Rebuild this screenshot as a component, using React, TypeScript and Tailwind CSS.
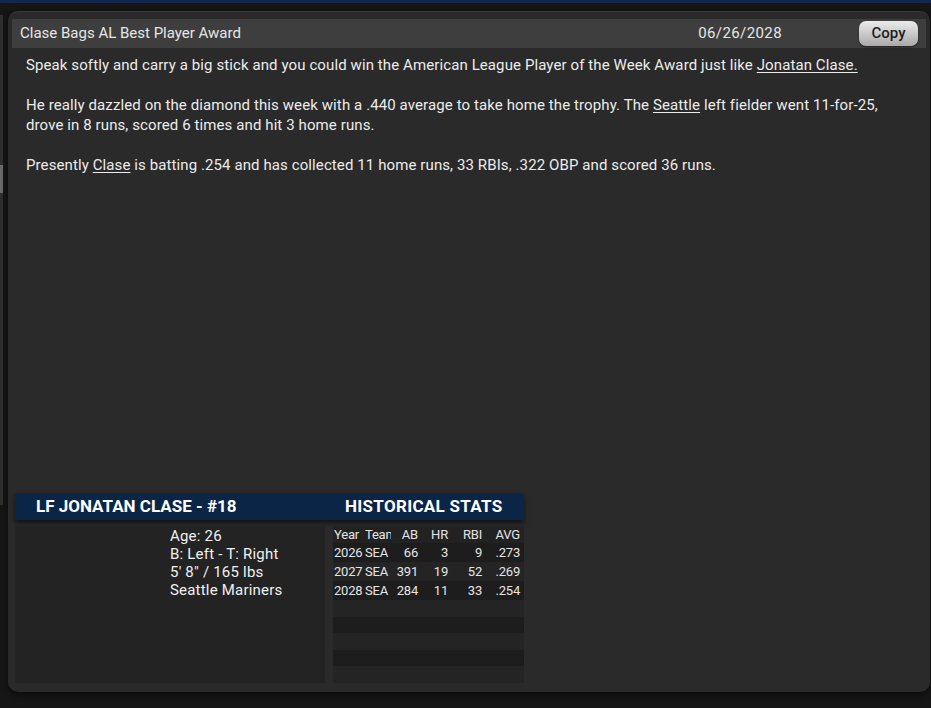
import React from "react";

const rows = [
  { y: "2026", t: "SEA", ab: "66", hr: "3", rbi: "9", avg: ".273" },
  { y: "2027", t: "SEA", ab: "391", hr: "19", rbi: "52", avg: ".269" },
  { y: "2028", t: "SEA", ab: "284", hr: "11", rbi: "33", avg: ".254" },
];

function Cells({ c }: { c: string[] }) {
  return (
    <>
      <div className="w-[32px] whitespace-nowrap pl-[1px]">{c[0]}</div>
      <div className="w-[26px] overflow-hidden whitespace-nowrap">{c[1]}</div>
      <div className="w-[28px] pr-[1px] text-right">{c[2]}</div>
      <div className="w-[30px] pr-[1px] text-right">{c[3]}</div>
      <div className="w-[34px] pr-[1px] text-right">{c[4]}</div>
      <div className="w-[38px] pr-[1px] text-right">{c[5]}</div>
    </>
  );
}

function Row({ r, i }: { r?: (typeof rows)[number]; i: number }) {
  const bg = i % 2 === 0 ? "bg-[#1d1d1e]" : "bg-[#242425]";
  return (
    <div className={`flex h-[19px] items-center text-[13px] tracking-[-0.2px] text-[#e4e4e4] ${bg}`}>
      <Cells c={r ? [r.y, r.t, r.ab, r.hr, r.rbi, r.avg] : ["", "", "", "", "", ""]} />
    </div>
  );
}

export default function App() {
  return (
    <div className="flex h-[708px] w-full flex-col overflow-hidden bg-[#161616] font-['Roboto',sans-serif]">
      <div className="h-[3px] bg-[#13284d]" />
      <div className="flex flex-1">
        <div className="mt-[12px] flex h-[490px] w-[3px] flex-col bg-[#2f2f2f]">
          <div className="mt-[150px] h-[28px] bg-[#6a6a6a]" />
        </div>
        <div className="ml-[5px] mt-[8px] flex h-[681px] w-[922px] flex-col rounded-[10px] border-t border-[#3a3a3a] bg-[#2a2a2a] px-[4px] pb-[9px] pt-[7px] shadow-[0_2px_6px_rgba(0,0,0,0.6)]">
          <div className="flex h-[29px] items-center bg-[#3e3e3e] pl-[8px] pr-[8px]">
            <div className="flex-1 text-[15px] text-[#e6e6e6]">Clase Bags AL Best Player Award</div>
            <div className="mr-[77px] text-[15px] tracking-[0.4px] text-[#e6e6e6]">06/26/2028</div>
            <button className="h-[25px] w-[59px] rounded-[7px] bg-gradient-to-b from-[#ececec] to-[#a9a9a9] text-[15px] font-medium text-[#1e1e1e] shadow-[0_1px_2px_rgba(0,0,0,0.5)]">
              Copy
            </button>
          </div>
          <div className="flex-1 pl-[14px] pr-[36px] pt-[7px] text-[15px] leading-[20px] tracking-[0.1px] text-[#ececec]">
            <p>
              Speak softly and carry a big stick and you could win the American League Player of the Week Award just like{" "}
              <span className="underline underline-offset-2">Jonatan Clase.</span>
            </p>
            <p className="mt-[20px]">
              He really dazzled on the diamond this week with a .440 average to take home the trophy. The{" "}
              <span className="underline underline-offset-2">Seattle</span> left fielder went 11-for-25, drove in 8 runs, scored 6 times and hit 3 home runs.
            </p>
            <p className="mt-[20px]">
              Presently <span className="underline underline-offset-2">Clase</span> is batting .254 and has collected 11 home runs, 33 RBIs, .322 OBP and scored 36 runs.
            </p>
          </div>
          <div className="ml-[3px] flex w-[509px] flex-col">
            <div className="flex h-[27px] items-center rounded-t-[3px] bg-[#0b2547] text-[17px] font-bold text-white shadow-[0_3px_5px_rgba(0,0,0,0.55)]">
              <div className="w-[318px] pl-[21px]">LF JONATAN CLASE - #18</div>
              <div className="pl-[12px] tracking-[0.3px]">HISTORICAL STATS</div>
            </div>
            <div className="mt-[6px] flex h-[157px] gap-[8px]">
              <div className="w-[310px] bg-[#232324] pl-[155px] pt-[1px] text-[15px] leading-[18px] tracking-[0.2px] text-[#f0f0f0]">
                <div>Age: 26</div>
                <div>B: Left - T: Right</div>
                <div>5' 8" / 165 lbs</div>
                <div>Seattle Mariners</div>
              </div>
              <div className="flex w-[191px] flex-col overflow-hidden bg-[#202021]">
                <div className="flex h-[17px] items-center bg-[#222223] text-[13px] tracking-[-0.2px] text-[#e4e4e4]">
                  <Cells c={["Year", "Team", "AB", "HR", "RBI", "AVG"]} />
                </div>
                {rows.map((r, i) => (
                  <Row key={i} r={r} i={i} />
                ))}
                {[3, 4, 5, 6, 7].map((i) => (
                  <Row key={i} i={i} />
                ))}
              </div>
            </div>
          </div>
        </div>
      </div>
    </div>
  );
}
